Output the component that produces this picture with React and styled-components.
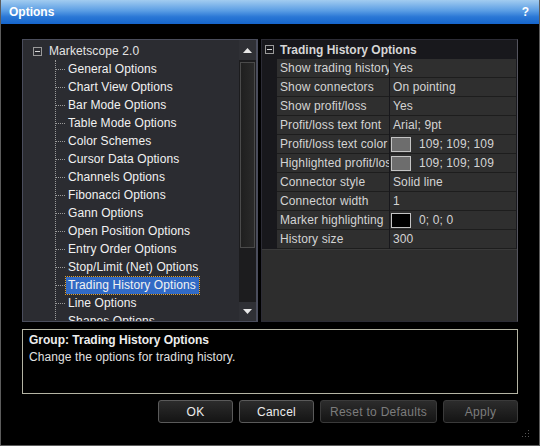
import React from 'react';
import styled, { createGlobalStyle } from 'styled-components';

const GlobalStyle = createGlobalStyle`
    html, body {
        margin: 0;
        padding: 0;
        background: #000;
    }
    * {
        box-sizing: border-box;
    }
`;

const Window = styled.div`
    width: 540px;
    height: 446px;
    display: flex;
    flex-direction: column;
    background: #000;
    border: 1px solid #5c5c5c;
    border-top: none;
    font-family: "Liberation Sans", Arial, sans-serif;
    font-size: 12px;
    color: #e4e4e4;
    position: relative;
    overflow: hidden;
`;

const TitleBar = styled.div`
    height: 24px;
    display: flex;
    align-items: center;
    justify-content: space-between;
    padding: 0 10px 0 8px;
    background: linear-gradient(#a2ccf0 0%, #5a9de4 45%, #2b78d6 70%, #1565cc 100%);
    color: #fff;
    font-weight: bold;
    font-size: 12px;
`;

const Body = styled.div`
    flex: 1;
    display: flex;
    flex-direction: column;
    padding: 15px 21px 0 21px;
`;

const TopRow = styled.div`
    display: flex;
    gap: 3px;
    height: 283px;
`;

const TreePanel = styled.div`
    width: 236px;
    display: flex;
    border: 1px solid #4a4d5c;
    border-right-width: 2px;
    background: #2b2c31;
`;

const TreeContent = styled.div`
    flex: 1;
    overflow: hidden;
    padding: 2px 0 0 10px;
`;

const TreeRoot = styled.div`
    display: flex;
    align-items: center;
    height: 18px;
    gap: 7px;
    letter-spacing: 0.1px;
`;

const Expander = styled.span`
    width: 9px;
    height: 9px;
    border: 1px solid #9a9a9a;
    position: relative;
    flex: none;
    &::after {
        content: '';
        position: absolute;
        left: 1px;
        right: 1px;
        top: 3px;
        height: 1px;
        background: #d8d8d8;
    }
`;

const Children = styled.div`
    margin-left: 22px;
    border-left: 1px dotted #9a9a9a;
`;

const TreeItem = styled.div`
    display: flex;
    align-items: center;
    height: 18px;
    white-space: nowrap;
    letter-spacing: 0.1px;
    &::before {
        content: '';
        width: 9px;
        border-top: 1px dotted #9a9a9a;
        flex: none;
    }
`;

const ItemLabel = styled.span`
    padding: 1px 3px 1px 2px;
    margin-left: 1px;
    line-height: 15px;
    background: ${p => (p.selected ? '#316ac5' : 'transparent')};
    outline: ${p => (p.selected ? '1px dotted #e0a030' : 'none')};
    color: #f2f2f2;
`;

const ScrollBar = styled.div`
    width: 17px;
    display: flex;
    flex-direction: column;
    background: #1c1c1e;
`;

const ScrollButton = styled.div`
    height: ${p => p.h}px;
    display: flex;
    align-items: center;
    justify-content: center;
    background: #2f3035;
    flex: none;
`;

const Thumb = styled.div`
    height: 186px;
    margin: 2px 1px 0;
    border: 1px solid #4a4a4a;
    background: linear-gradient(90deg, #1f1f1f, #2a2a2a);
`;

const Track = styled.div`
    flex: 1;
`;

const PropPanel = styled.div`
    flex: 1;
    display: flex;
    flex-direction: column;
    border: 1px solid #2c2c36;
    border-right: 1px solid #55555f;
    background: #2d2d2d;
`;

const PropHeader = styled.div`
    height: 19px;
    display: flex;
    align-items: center;
    gap: 6px;
    padding-left: 3px;
    background: #18181c;
    font-weight: bold;
    color: #d6d6d6;
`;

const PropRow = styled.div`
    display: flex;
    height: 19px;
    background: #18181c;
`;

const Gutter = styled.div`
    width: 15px;
    flex: none;
`;

const Cell = styled.div`
    width: ${p => (p.w ? `${p.w}px` : 'auto')};
    flex: ${p => (p.w ? 'none' : '1')};
    display: flex;
    align-items: center;
    gap: 8px;
    padding-left: 3px;
    margin-right: 1px;
    border-bottom: 1px solid #1d1d1d;
    background: #2f2f2f;
    color: #d4d4d4;
    letter-spacing: 0.12px;
    white-space: nowrap;
    overflow: hidden;
`;

const Swatch = styled.span`
    width: 20px;
    height: 15px;
    flex: none;
    margin-left: -2px;
    border: 1px solid #c4c4c4;
    background: ${p => p.color};
`;

const PropFill = styled.div`
    flex: 1;
    border-top: 1px solid #3a3a3a;
`;

const Description = styled.div`
    margin-top: 7px;
    height: 65px;
    width: 496px;
    border: 1px solid #b4b4a4;
    background: #000;
    padding: 3px 6px;
    display: flex;
    flex-direction: column;
    gap: 3px;
`;

const DescTitle = styled.div`
    font-weight: bold;
    color: #ededed;
`;

const DescText = styled.div`
    color: #e0e0e0;
    letter-spacing: 0.1px;
`;

const ButtonRow = styled.div`
    display: flex;
    justify-content: flex-end;
    gap: 6px;
    margin-top: 6px;
    width: 496px;
`;

const Button = styled.div`
    width: ${p => p.w}px;
    height: 23px;
    display: flex;
    align-items: center;
    justify-content: center;
    border: 1px solid ${p => (p.disabled ? '#3a3a3a' : '#5a5a5a')};
    border-radius: 3px;
    background: linear-gradient(#2c2c2c, #141414);
    color: ${p => (p.disabled ? '#7c7c7c' : '#ececec')};
    font-size: 12px;
    letter-spacing: 0.3px;
`;

const Grip = styled.div`
    position: absolute;
    right: 10px;
    bottom: 8px;
    width: 8px;
    height: 8px;
    background:
        radial-gradient(circle, #555 0.7px, transparent 0.8px) 0 0 / 3px 3px;
    clip-path: polygon(100% 0, 100% 100%, 0 100%);
`;

const treeItems = [
    'General Options',
    'Chart View Options',
    'Bar Mode Options',
    'Table Mode Options',
    'Color Schemes',
    'Cursor Data Options',
    'Channels Options',
    'Fibonacci Options',
    'Gann Options',
    'Open Position Options',
    'Entry Order Options',
    'Stop/Limit (Net) Options',
    'Trading History Options',
    'Line Options',
    'Shapes Options',
];

const props = [
    { name: 'Show trading history', value: 'Yes' },
    { name: 'Show connectors', value: 'On pointing' },
    { name: 'Show profit/loss', value: 'Yes' },
    { name: 'Profit/loss text font', value: 'Arial; 9pt' },
    { name: 'Profit/loss text color', value: '109; 109; 109', color: '#6d6d6d' },
    { name: 'Highlighted profit/loss', value: '109; 109; 109', color: '#6d6d6d' },
    { name: 'Connector style', value: 'Solid line' },
    { name: 'Connector width', value: '1' },
    { name: 'Marker highlighting', value: '0; 0; 0', color: '#000' },
    { name: 'History size', value: '300' },
];

const Arrow = ({ down }) => (
    <svg width="9" height="5" viewBox="0 0 9 5">
        <polygon points={down ? '0,0 9,0 4.5,5' : '4.5,0 9,5 0,5'} fill="#e8e8e8" />
    </svg>
);

export default function App() {
    return (
        <>
            <GlobalStyle />
            <Window>
                <TitleBar>
                    <span>Options</span>
                    <span>?</span>
                </TitleBar>
                <Body>
                    <TopRow>
                        <TreePanel>
                            <TreeContent>
                                <TreeRoot>
                                    <Expander />
                                    <span>Marketscope 2.0</span>
                                </TreeRoot>
                                <Children>
                                    {treeItems.map(item => (
                                        <TreeItem key={item}>
                                            <ItemLabel selected={item === 'Trading History Options'}>
                                                {item}
                                            </ItemLabel>
                                        </TreeItem>
                                    ))}
                                </Children>
                            </TreeContent>
                            <ScrollBar>
                                <ScrollButton h={20}><Arrow /></ScrollButton>
                                <Thumb />
                                <Track />
                                <ScrollButton h={19}><Arrow down /></ScrollButton>
                            </ScrollBar>
                        </TreePanel>
                        <PropPanel>
                            <PropHeader>
                                <Expander />
                                <span>Trading History Options</span>
                            </PropHeader>
                            {props.map(p => (
                                <PropRow key={p.name}>
                                    <Gutter />
                                    <Cell w={112}>{p.name}</Cell>
                                    <Cell>
                                        {p.color && <Swatch color={p.color} />}
                                        {p.value}
                                    </Cell>
                                </PropRow>
                            ))}
                            <PropFill />
                        </PropPanel>
                    </TopRow>
                    <Description>
                        <DescTitle>Group: Trading History Options</DescTitle>
                        <DescText>Change the options for trading history.</DescText>
                    </Description>
                    <ButtonRow>
                        <Button w={75}>OK</Button>
                        <Button w={75}>Cancel</Button>
                        <Button w={117} disabled>Reset to Defaults</Button>
                        <Button w={75} disabled>Apply</Button>
                    </ButtonRow>
                </Body>
                <Grip />
            </Window>
        </>
    );
}
